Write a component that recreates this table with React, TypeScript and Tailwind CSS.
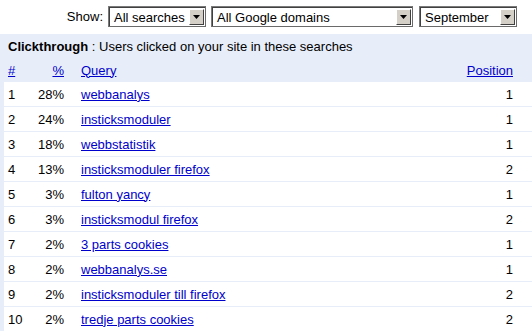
const rows = [
  { n: 1, pct: "28%", q: "webbanalys", pos: 1 },
  { n: 2, pct: "24%", q: "insticksmoduler", pos: 1 },
  { n: 3, pct: "18%", q: "webbstatistik", pos: 1 },
  { n: 4, pct: "13%", q: "insticksmoduler firefox", pos: 2 },
  { n: 5, pct: "3%", q: "fulton yancy", pos: 1 },
  { n: 6, pct: "3%", q: "insticksmodul firefox", pos: 2 },
  { n: 7, pct: "2%", q: "3 parts cookies", pos: 1 },
  { n: 8, pct: "2%", q: "webbanalys.se", pos: 1 },
  { n: 9, pct: "2%", q: "insticksmoduler till firefox", pos: 2 },
  { n: 10, pct: "2%", q: "tredje parts cookies", pos: 2 },
];

function Select({ label, width }: { label: string; width: string }) {
  return (
    <div
      className={`${width} h-[21px] flex items-center bg-white border border-t-[#7a7a7a] border-l-[#7a7a7a] border-b-[#6a6a6a] border-r-[#6a6a6a]`}
    >
      <div className="flex-1 h-full flex items-center pl-[4px] border-t border-l border-[#404040]">
        {label}
      </div>
      <div className="h-full flex items-center pr-[1px] py-[1px] border-t border-[#404040]">
        <div className="w-[15px] h-[16px] bg-[#d4d0c8] flex items-center justify-center border border-t-[#ffffff] border-l-[#ffffff] border-b-[#404040] border-r-[#404040]">
          <svg width="7" height="4" viewBox="0 0 7 4">
            <path d="M0 0h7L3.5 4z" fill="#000" />
          </svg>
        </div>
      </div>
    </div>
  );
}

export default function App() {
  return (
    <div className="w-[532px] h-[331px] bg-white overflow-hidden font-['Liberation_Sans',Arial,sans-serif] text-[13px] text-black leading-none">
      {/* Filters */}
      <div className="h-[34px] flex justify-end items-start pt-[6px] pr-[15px]">
        <span className="h-[21px] flex items-center mr-[5px]">Show:</span>
        <Select label="All searches" width="w-[98px]" />
        <div className="w-[5px]" />
        <Select label="All Google domains" width="w-[202px]" />
        <div className="w-[6px]" />
        <Select label="September" width="w-[98px]" />
      </div>

      {/* Clickthrough panel */}
      <div className="bg-[#e8eef9] pl-[4px] h-[297px]">
        <div className="h-[24px] flex items-center pl-[4px]">
          <b>Clickthrough</b>
          <span>&nbsp;: Users clicked on your site in these searches</span>
        </div>
        <div className="h-[24px] flex items-center pr-[19px]">
          <div className="w-[30px] pl-[4px]">
            <a href="#" className="text-[#0000cc] underline">#</a>
          </div>
          <div className="w-[30px] text-right">
            <a href="#" className="text-[#0000cc] underline">%</a>
          </div>
          <div className="flex-1 pl-[17px]">
            <a href="#" className="text-[#0000cc] underline">Query</a>
          </div>
          <a href="#" className="text-[#0000cc] underline">Position</a>
        </div>
        <div className="flex flex-col gap-px">
          {rows.map((r) => (
            <div key={r.n} className="h-[24px] bg-white flex items-center pr-[19px]">
              <div className="w-[30px] pl-[4px]">{r.n}</div>
              <div className="w-[30px] text-right">{r.pct}</div>
              <div className="flex-1 pl-[17px]">
                <a href="#" className="text-[#0000cc] underline">{r.q}</a>
              </div>
              <div>{r.pos}</div>
            </div>
          ))}
        </div>
      </div>
    </div>
  );
}
